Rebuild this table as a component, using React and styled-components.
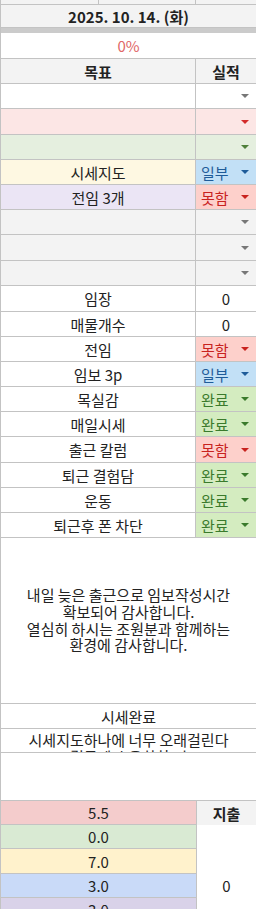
import styled, { createGlobalStyle } from "styled-components";

const GRID = "#c3c3c3";

const Global = createGlobalStyle`
    html, body {
        margin: 0;
        padding: 0;
        background: #fff;
        overflow: hidden;
    }
    body {
        font-family: "Noto Sans CJK KR", "Noto Sans", sans-serif;
        font-size: 15px;
        color: #222;
    }
`;

const STATUS = {
    완료: { bg: "#d4ecc0", color: "#3a7a2c" },
    못함: { bg: "#fdd0cb", color: "#c8231f" },
    일부: { bg: "#c2e0f6", color: "#1f5c99" },
};

const goals = [
    { h: 25, bg: "#fff", arrow: "#777" },
    { h: 26, bg: "#fce6e5", arrow: "#d32b2b" },
    { h: 25, bg: "#e5efdf", arrow: "#4f7f3a" },
    { h: 25, label: "시세지도", bg: "#fef8e2", status: "일부" },
    { h: 25, label: "전임 3개", bg: "#ebe5f5", status: "못함" },
    { h: 25, bg: "#f3f3f3", arrow: "#777" },
    { h: 26, bg: "#f3f3f3", arrow: "#777" },
    { h: 25, bg: "#f3f3f3", arrow: "#777" },
    { h: 26, label: "임장", value: "0" },
    { h: 25, label: "매물개수", value: "0" },
    { h: 25, label: "전임", status: "못함" },
    { h: 25, label: "임보 3p", status: "일부" },
    { h: 25, label: "목실감", status: "완료" },
    { h: 25, label: "매일시세", status: "완료" },
    { h: 26, label: "출근 칼럼", status: "못함" },
    { h: 25, label: "퇴근 결험담", status: "완료" },
    { h: 25, label: "운동", status: "완료" },
    { h: 25, label: "퇴근후 폰 차단", status: "완료" },
];

const scores = [
    { h: 24, value: "5.5", bg: "#f4cccc" },
    { h: 24, value: "0.0", bg: "#d9ead3" },
    { h: 25, value: "7.0", bg: "#fff2cc" },
    { h: 24, value: "3.0", bg: "#c9daf8" },
    { h: 24, value: "3.0", bg: "#d9d2e9" },
];

const Arrow = ({ color }) => (
    <svg width="8" height="4" viewBox="0 0 8 4">
        <polygon points="0,0 8,0 4,4" fill={color} />
    </svg>
);

const App = () => (
    <>
        <Global />
        <Sheet>
            <Row h={5} bg="#f3f3f3">
                <Cell w={98} bg="#f3f3f3" />
                <Cell w={97} bg="#f3f3f3" />
                <Cell grow bg="#f3f3f3" />
            </Row>
            <Row h={23} bg="#f3f3f3">
                <Cell grow bold bg="#f3f3f3">2025. 10. 14. (화)</Cell>
            </Row>
            <Band />
            <Row h={26}>
                <Cell grow color="#e06666">0%</Cell>
            </Row>
            <Row h={25}>
                <Cell w={195} bold bg="#f3f3f3">목표</Cell>
                <Cell grow bold bg="#f3f3f3">실적</Cell>
            </Row>
            {goals.map((g, i) => {
                const st = g.status && STATUS[g.status];
                return (
                    <Row key={i} h={g.h}>
                        <Cell w={195} bg={g.bg || "#fff"}>{g.label}</Cell>
                        {st ? (
                            <Chip bg={st.bg} color={st.color}>
                                <span>{g.status}</span>
                                <Arrow color={st.color} />
                            </Chip>
                        ) : g.value ? (
                            <Cell grow>{g.value}</Cell>
                        ) : (
                            <Chip bg={g.bg}>
                                <span />
                                <Arrow color={g.arrow} />
                            </Chip>
                        )}
                    </Row>
                );
            })}
            <Row h={166}>
                <Note>
                    내일 늦은 출근으로 임보작성시간
                    <br />
                    확보되어 감사합니다.
                    <br />
                    열심히 하시는 조원분과 함께하는
                    <br />
                    환경에 감사합니다.
                </Note>
            </Row>
            <Row h={25}>
                <Cell grow>시세완료</Cell>
            </Row>
            <Row h={24}>
                <Clipped>
                    시세지도하나에 너무 오래걸린다
                    <br />
                    결국엔 효율화할 것
                </Clipped>
            </Row>
            <Row h={48} />
            <Totals>
                <ScoreCol>
                    {scores.map((s, i) => (
                        <Row key={i} h={s.h}>
                            <Cell grow bg={s.bg}>{s.value}</Cell>
                        </Row>
                    ))}
                </ScoreCol>
                <SpendCol>
                    <SpendHead>지출</SpendHead>
                    <SpendValue>0</SpendValue>
                </SpendCol>
            </Totals>
        </Sheet>
    </>
);

export default App;

const Sheet = styled.div`
    width: 256px;
    height: 909px;
    box-sizing: border-box;
    border-left: 1px solid ${GRID};
    overflow: hidden;
    display: flex;
    flex-direction: column;
`;

const Row = styled.div`
    display: flex;
    flex: none;
    height: ${(p) => p.h}px;
    box-sizing: border-box;
    border-bottom: 1px solid ${GRID};
    background: ${(p) => p.bg || "#fff"};
`;

const Cell = styled.div`
    display: flex;
    align-items: center;
    justify-content: center;
    box-sizing: border-box;
    ${(p) => (p.grow ? "flex: 1;" : `width: ${p.w}px; flex: none; border-right: 1px solid ${GRID};`)}
    background: ${(p) => p.bg || "#fff"};
    color: ${(p) => p.color || "#222"};
    font-weight: ${(p) => (p.bold ? 700 : 400)};
    white-space: nowrap;
    overflow: hidden;
`;

const Chip = styled.div`
    flex: 1;
    display: flex;
    align-items: center;
    justify-content: space-between;
    padding: 0 7px 0 5px;
    background: ${(p) => p.bg || "#fff"};
    color: ${(p) => p.color || "#222"};
`;

const Band = styled.div`
    flex: none;
    height: 5px;
    background: #cbcbcb;
`;

const Note = styled.div`
    flex: 1;
    display: flex;
    align-items: center;
    justify-content: center;
    text-align: center;
    line-height: 16.7px;
`;

const Clipped = styled.div`
    flex: 1;
    overflow: hidden;
    text-align: center;
    line-height: 17px;
    padding-top: 2px;
    white-space: nowrap;
`;

const Totals = styled.div`
    display: flex;
    flex: 1;
`;

const ScoreCol = styled.div`
    width: 195px;
    flex: none;
    border-right: 1px solid ${GRID};
    display: flex;
    flex-direction: column;
`;

const SpendCol = styled.div`
    flex: 1;
    display: flex;
    flex-direction: column;
`;

const SpendHead = styled.div`
    height: 24px;
    box-sizing: border-box;
    display: flex;
    align-items: center;
    justify-content: center;
    background: #f3f3f3;
    font-weight: 700;
`;

const SpendValue = styled.div`
    height: 120px;
    display: flex;
    align-items: center;
    justify-content: center;
`;
